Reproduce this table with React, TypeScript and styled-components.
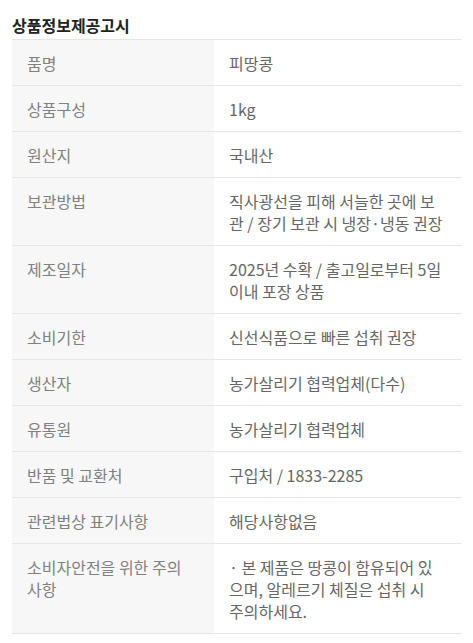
import React from "react";
import styled, { createGlobalStyle } from "styled-components";

const GlobalStyle = createGlobalStyle`
  body {
    margin: 0;
    background: #ffffff;
    font-family: "Noto Sans CJK KR", "Noto Sans", sans-serif;
  }
`;

// lines are kept as they break on the original page
type InfoRow = {
  label: string[];
  value: string[];
};

const rows: InfoRow[] = [
  { label: ["품명"], value: ["피땅콩"] },
  { label: ["상품구성"], value: ["1kg"] },
  { label: ["원산지"], value: ["국내산"] },
  {
    label: ["보관방법"],
    value: ["직사광선을 피해 서늘한 곳에 보", "관 / 장기 보관 시 냉장·냉동 권장"],
  },
  {
    label: ["제조일자"],
    value: ["2025년 수확 / 출고일로부터 5일", "이내 포장 상품"],
  },
  { label: ["소비기한"], value: ["신선식품으로 빠른 섭취 권장"] },
  { label: ["생산자"], value: ["농가살리기 협력업체(다수)"] },
  { label: ["유통원"], value: ["농가살리기 협력업체"] },
  { label: ["반품 및 교환처"], value: ["구입처 / 1833-2285"] },
  { label: ["관련법상 표기사항"], value: ["해당사항없음"] },
  {
    label: ["소비자안전을 위한 주의", "사항"],
    value: ["· 본 제품은 땅콩이 함유되어 있", "으며, 알레르기 체질은 섭취 시", "주의하세요."],
  },
];

const Section = styled.section`
  padding: 14px 11px 0 12px;
`;

const Title = styled.h2`
  margin: 0 0 3px;
  font-size: 16px;
  line-height: 22px;
  font-weight: 700;
  color: #222222;
`;

const Table = styled.div`
  border-top: 1px solid #e6e6e6;
`;

const Row = styled.div`
  display: grid;
  grid-template-columns: 202px 1fr;
  border-bottom: 1px solid #e6e6e6;
`;

const Cell = styled.div<{ $head?: boolean }>`
  padding: 11.5px 10px 11.5px 15px;
  font-size: 16px;
  line-height: 22px;
  background: ${(p) => (p.$head ? "#f7f7f7" : "#ffffff")};
  color: ${(p) => (p.$head ? "#808080" : "#666666")};
`;

const Line = styled.span`
  display: block;
  white-space: nowrap;
`;

export default function App() {
  return (
    <>
      <GlobalStyle />
      <Section>
        <Title>상품정보제공고시</Title>
        <Table>
          {rows.map((r) => (
            <Row key={r.label.join("")}>
              <Cell $head>
                {r.label.map((t) => (
                  <Line key={t}>{t}</Line>
                ))}
              </Cell>
              <Cell>
                {r.value.map((t) => (
                  <Line key={t}>{t}</Line>
                ))}
              </Cell>
            </Row>
          ))}
        </Table>
      </Section>
    </>
  );
}
